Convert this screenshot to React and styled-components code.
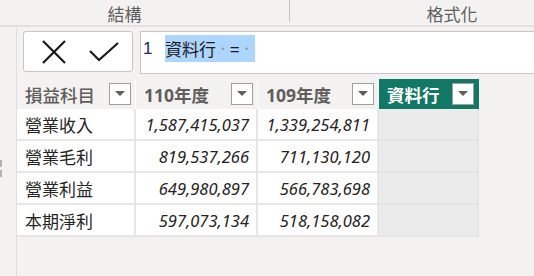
import React from 'react'
import styled, { createGlobalStyle } from 'styled-components'

const GlobalStyle = createGlobalStyle`
	html, body {
		margin: 0;
		padding: 0;
		background: #f3f2f1;
		font-family: "Noto Sans", "Noto Sans CJK TC", sans-serif;
		overflow: hidden;
	}
`

const columns = [
	{ key: 'name', label: '損益科目', width: 119, plain: true },
	{ key: 'y110', label: '110年度', width: 122 },
	{ key: 'y109', label: '109年度', width: 121 },
	{ key: 'new', label: '資料行', width: 100, active: true },
]

const rows = [
	{ name: '營業收入', y110: '1,587,415,037', y109: '1,339,254,811' },
	{ name: '營業毛利', y110: '819,537,266', y109: '711,130,120' },
	{ name: '營業利益', y110: '649,980,897', y109: '566,783,698' },
	{ name: '本期淨利', y110: '597,073,134', y109: '518,158,082' },
]

const App = () => {
	return (
		<>
			<GlobalStyle />
			<Page>
				<TopBar>
					<Tab $width={290} $pad={40} $divider>結構</Tab>
					<Tab $width={244} $pad={0} $shift={80}>格式化</Tab>
				</TopBar>
				<Body>
					<Rail>
						<RailMark />
						<RailMark />
					</Rail>
					<Main>
						<FormulaRow>
							<Actions>
								<svg width="26" height="26" viewBox="0 0 26 26">
									<path d="M2 2 L24 24 M24 2 L2 24" stroke="#1b1a19" strokeWidth="2.2" fill="none" />
								</svg>
								<svg width="30" height="22" viewBox="0 0 30 22">
									<path d="M1 10 L10 19 L29 2" stroke="#1b1a19" strokeWidth="2.2" fill="none" />
								</svg>
							</Actions>
							<Editor>
								<LineNo>1</LineNo>
								<Selection>
									資料行<Dot>·</Dot>=<Dot>·</Dot>
								</Selection>
							</Editor>
						</FormulaRow>
						<Table>
							<Row>
								{columns.map(c => (
									<HeadCell key={c.key} $width={c.width} $active={c.active}>
										<HeadLabel $plain={c.plain}>{c.label}</HeadLabel>
										<Drop>
											<svg width="10" height="6" viewBox="0 0 10 6">
												<path d="M0 0 L10 0 L5 5 Z" fill="#605e5c" />
											</svg>
										</Drop>
									</HeadCell>
								))}
							</Row>
							{rows.map(r => (
								<Row key={r.name}>
									<Cell $width={119}>{r.name}</Cell>
									<NumCell $width={122}>{r.y110}</NumCell>
									<NumCell $width={121}>{r.y109}</NumCell>
									<Cell $width={100} $empty />
								</Row>
							))}
						</Table>
					</Main>
				</Body>
			</Page>
		</>
	)
}

export default App

const Page = styled.div`
	width: 534px;
	height: 276px;
	overflow: hidden;
	background: #f3f2f1;
`

const TopBar = styled.div`
	height: 25px;
	display: flex;
	border-bottom: 2px solid #e3e1df;
	box-sizing: content-box;
`

const Tab = styled.div`
	flex: none;
	width: ${p => p.$width}px;
	height: 22px;
	display: flex;
	align-items: center;
	justify-content: center;
	padding-right: ${p => p.$pad}px;
	padding-left: ${p => p.$shift || 0}px;
	box-sizing: border-box;
	font-family: "Noto Sans CJK TC", sans-serif;
	font-size: 17px;
	color: #605e5c;
	border-right: ${p => (p.$divider ? '1px solid #c8c6c4' : 'none')};
	padding-top: 4px;
`

const Body = styled.div`
	display: flex;
	height: 249px;
`

const Rail = styled.div`
	width: 16px;
	flex: none;
	border-right: 1px solid #e1dfdd;
	display: flex;
	flex-direction: column;
	gap: 3px;
	padding-top: 133px;
`

const RailMark = styled.div`
	width: 2px;
	height: 7px;
	background: #b3b0ad;
`

const Main = styled.div`
	flex: 1;
	min-width: 0;
`

const FormulaRow = styled.div`
	display: flex;
	gap: 7px;
	padding: 4px 0 0 6px;
	height: 43px;
`

const Actions = styled.div`
	width: 110px;
	height: 41px;
	box-sizing: border-box;
	flex: none;
	background: #fff;
	border: 1px solid #c8c6c4;
	border-radius: 3px;
	display: flex;
	align-items: center;
	justify-content: center;
	gap: 22px;
	padding-left: 4px;
`

const Editor = styled.div`
	flex: 1;
	height: 43px;
	box-sizing: border-box;
	background: #fff;
	border: 1px solid #c8c6c4;
	border-right: none;
	display: flex;
	align-items: flex-start;
	padding: 3px 0 0 2px;
	font-family: "Noto Sans CJK TC", sans-serif;
	font-size: 17px;
	color: #1b1a19;
`

const LineNo = styled.span`
	width: 22px;
	font-family: "Liberation Sans", sans-serif;
	font-size: 17px;
	color: #232378;
	line-height: 27px;
`

const Selection = styled.span`
	background: #add6ff;
	height: 27px;
	line-height: 27px;
	padding-right: 2px;
	display: flex;
	align-items: center;
`

const Dot = styled.span`
	color: #9a9a9a;
	margin: 0 1px;
	font-size: 12px;
`

const Table = styled.div`
	margin-top: 5px;
	display: flex;
	flex-direction: column;
`

const Row = styled.div`
	display: flex;
`

const HeadCell = styled.div`
	width: ${p => p.$width}px;
	height: 30px;
	flex: none;
	box-sizing: border-box;
	display: flex;
	align-items: center;
	justify-content: space-between;
	padding: 0 4px 0 8px;
	background: ${p => (p.$active ? '#117865' : '#f3f2f1')};
	color: ${p => (p.$active ? '#ffffff' : '#605e5c')};
	border-right: 1px solid ${p => (p.$active ? '#117865' : '#ffffff')};
`

const HeadLabel = styled.span`
	font-family: "Noto Sans", "Noto Sans CJK TC", sans-serif;
	font-size: 17.5px;
	font-weight: ${p => (p.$plain ? 500 : 700)};
`

const Drop = styled.div`
	width: 22px;
	height: 22px;
	box-sizing: border-box;
	background: #fff;
	border: 1px solid #a19f9d;
	display: flex;
	align-items: center;
	justify-content: center;
`

const Cell = styled.div`
	width: ${p => p.$width}px;
	height: 32px;
	flex: none;
	box-sizing: border-box;
	display: flex;
	align-items: center;
	padding: 0 8px;
	background: ${p => (p.$empty ? '#ebebeb' : '#ffffff')};
	border-right: 2px solid #e6e6e6;
	border-bottom: 2px solid #e6e6e6;
	font-family: "Noto Sans CJK TC", sans-serif;
	font-size: 17px;
	color: #252423;
`

const NumCell = styled(Cell)`
	justify-content: flex-end;
	font-family: "Noto Sans", sans-serif;
	font-style: italic;
	font-size: 16.5px;
	padding-right: 7px;
`
